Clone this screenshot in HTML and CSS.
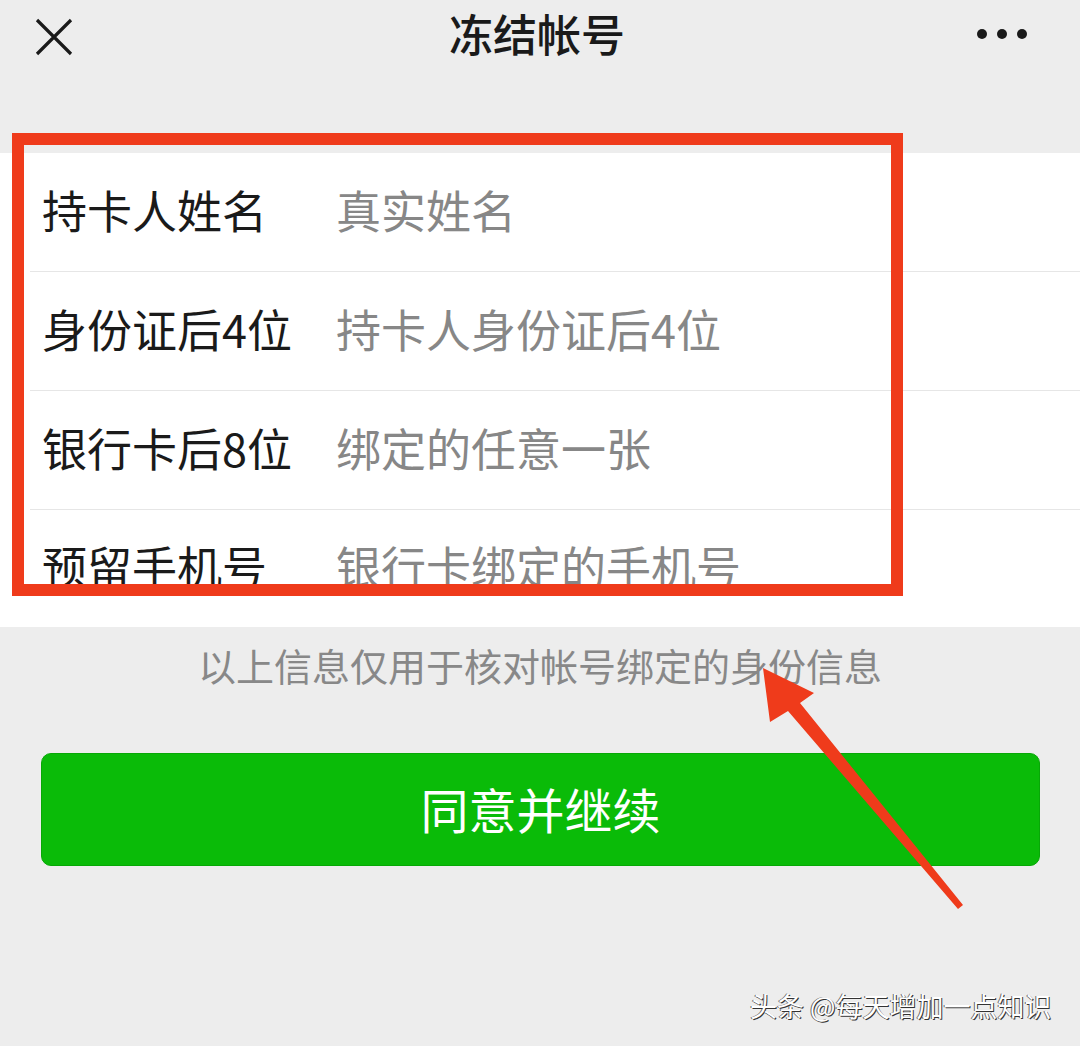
FILE: index.html
```html
<!DOCTYPE html>
<html lang="zh-CN">
<head>
    <meta charset="UTF-8">
    <meta name="viewport" content="width=device-width, initial-scale=1.0">
    <title>冻结帐号</title>
    <link rel="stylesheet" href="styles.css">
</head>
<body>

<div class="page">

<!-- Top bar -->
<div class="nav">
    <svg class="nav-close" width="40" height="40" viewBox="0 0 40 40">
        <path d="M3 3 L37 37 M37 3 L3 37" stroke="#1a1a1a" stroke-width="3.2" fill="none"/>
    </svg>
    <h1 class="nav-title">冻结帐号</h1>
    <svg class="nav-more" width="52" height="14" viewBox="0 0 52 14">
        <circle cx="6" cy="7" r="5" fill="#1a1a1a"/>
        <circle cx="26" cy="7" r="5" fill="#1a1a1a"/>
        <circle cx="46" cy="7" r="5" fill="#1a1a1a"/>
    </svg>
</div>

<!-- Form -->
<div class="form">
    <div class="form-row"><span class="label">持卡人姓名</span><span class="placeholder">真实姓名</span></div>
    <div class="form-row"><span class="label">身份证后4位</span><span class="placeholder">持卡人身份证后4位</span></div>
    <div class="form-row"><span class="label">银行卡后8位</span><span class="placeholder">绑定的任意一张</span></div>
    <div class="form-row"><span class="label">预留手机号</span><span class="placeholder">银行卡绑定的手机号</span></div>
</div>

<p class="tip">以上信息仅用于核对帐号绑定的身份信息</p>

<button type="button" class="btn-primary">同意并继续</button>

<!-- Annotations -->
<div class="mark-box"></div>
<svg class="mark-arrow" width="1080" height="1046" viewBox="0 0 1080 1046">
    <path d="M763 668 L770 722 L788 711 L958 909 L963 905 L800 703 L814 693 Z" fill="#ef3b1b"/>
</svg>

<div class="watermark">头条 @每天增加一点知识</div>

</div>

</body>
</html>
```

FILE: styles.css
```css
body {
    margin: 0;
    background-color: #ededed;
    font-family: "Noto Sans CJK SC", "Noto Sans", sans-serif;
}

.page {
    position: relative;
    width: 1080px;
    height: 1046px;
    overflow: hidden;
}

/* top bar */
.nav {
    height: 72px;
    display: flex;
    align-items: center;
    justify-content: space-between;
    padding: 0 52px 0 34px;
}

.nav-close {
    margin-top: 1px;
}

.nav-title {
    margin: 0;
    font-size: 44px;
    font-weight: 500;
    color: #1a1a1a;
    position: relative;
    left: 12px;
    top: -3px;
}

.nav-more {
    margin-top: -4px;
}

/* form */
.form {
    margin-top: 81px;
    background-color: #fff;
}

.form-row {
    height: 118px;
    display: flex;
    align-items: center;
    margin-left: 30px;
    padding-left: 12px;
    border-bottom: 1px solid #e6e6e6;
    font-size: 45px;
}

.form-row:last-child {
    height: 117px;
    border-bottom: none;
}

.label {
    width: 294px;
    color: #1a1a1a;
    margin-top: -6px;
}

.placeholder {
    color: #878787;
    margin-top: -6px;
}

.tip {
    margin: 0;
    padding-top: 10px;
    height: 56px;
    line-height: 56px;
    text-align: center;
    font-size: 38px;
    color: #888;
}

.btn-primary {
    display: block;
    margin: 60px 0 0 41px;
    width: 999px;
    height: 113px;
    border: 1px solid #07a806;
    border-radius: 10px;
    background-color: #0abb08;
    color: #fff;
    font-family: inherit;
    font-size: 48px;
    padding: 0 0 4px;
}

/* annotations */
.mark-box {
    position: absolute;
    left: 12px;
    top: 133px;
    width: 867px;
    height: 439px;
    border: 12px solid #ef3b1b;
}

.mark-arrow {
    position: absolute;
    left: 0;
    top: 0;
}

.watermark {
    position: absolute;
    left: 750px;
    top: 986px;
    font-size: 27px;
    color: #fff;
    text-shadow: 1px 1px 0 #333, -1px 0 0 #666;
}
```
